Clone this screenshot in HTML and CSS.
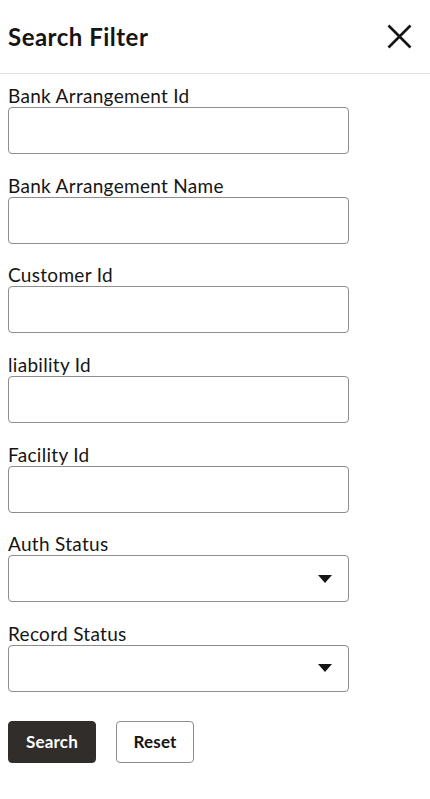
FILE: index.html
```html
<!DOCTYPE html>
<html lang="en">
<head>
<meta charset="utf-8">
<title>Search Filter</title>
<link rel="stylesheet" href="styles.css">
</head>
<body>
<div class="panel">
  <header class="header">
    <h1 class="title">Search Filter</h1>
    <button class="close" aria-label="Close">
      <svg width="25" height="25" viewBox="0 0 25 25"><path d="M1.5 1.5 L23.5 23.5 M23.5 1.5 L1.5 23.5" stroke="#161513" stroke-width="2.6" fill="none"/></svg>
    </button>
  </header>
  <form class="form">
    <label class="field"><span class="label">Bank Arrangement Id</span><span class="input"></span></label>
    <label class="field"><span class="label">Bank Arrangement Name</span><span class="input"></span></label>
    <label class="field"><span class="label">Customer Id</span><span class="input"></span></label>
    <label class="field"><span class="label">liability Id</span><span class="input"></span></label>
    <label class="field"><span class="label">Facility Id</span><span class="input"></span></label>
    <label class="field"><span class="label">Auth Status</span><span class="input select"><svg class="caret" width="14" height="8" viewBox="0 0 14 8"><path d="M0 0 H14 L7 8 Z" fill="#161513"/></svg></span></label>
    <label class="field"><span class="label">Record Status</span><span class="input select"><svg class="caret" width="14" height="8" viewBox="0 0 14 8"><path d="M0 0 H14 L7 8 Z" fill="#161513"/></svg></span></label>
    <div class="actions">
      <button type="button" class="btn primary">Search</button>
      <button type="button" class="btn secondary">Reset</button>
    </div>
  </form>
</div>
</body>
</html>
```
FILE: styles.css
```css
* { box-sizing: border-box; }
html, body { margin: 0; padding: 0; background: #fff; }
body { font-family: Lato, "Noto Sans", sans-serif; color: #161513; }
.header {
  height: 74px;
  border-bottom: 1px solid #e4e2e0;
  display: flex;
  align-items: center;
  justify-content: space-between;
  padding: 0 18px 0 8px;
}
.title { margin: 0; font-size: 24px; font-weight: 700; letter-spacing: 0.5px; }
.close { border: 0; background: none; padding: 0; width: 25px; height: 25px; display: block; }
.close svg { display: block; }
.form { width: 357px; padding: 11px 8px 0 8px; display: flex; flex-direction: column; }
.field { display: flex; flex-direction: column; margin-bottom: 20.67px; }
.label { font-size: 19px; line-height: 22px; height: 22px; letter-spacing: 0.3px; white-space: nowrap; }
.input {
  height: 47px;
  border: 1px solid #8f8d8a;
  border-radius: 4px;
  background: #fff;
  display: flex;
  align-items: center;
  justify-content: flex-end;
  padding-right: 16px;
}
.caret { display: block; }
.actions { display: flex; gap: 20px; margin-top: 8px; }
.btn {
  height: 42px;
  border-radius: 4px;
  font-family: Lato, "Noto Sans", sans-serif;
  font-size: 17px;
  font-weight: 700;
  letter-spacing: 0.2px;
  padding: 0;
}
.primary { width: 88px; background: #312d2a; color: #fff; border: 1px solid #312d2a; }
.secondary { width: 78px; background: #fff; color: #161513; border: 1px solid #8f8d8a; }
```
